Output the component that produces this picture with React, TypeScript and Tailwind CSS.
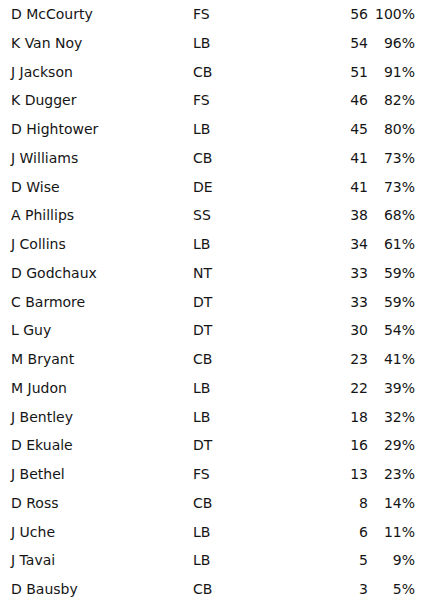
const rows: [string, string, number, string][] = [
  ["D McCourty", "FS", 56, "100%"],
  ["K Van Noy", "LB", 54, "96%"],
  ["J Jackson", "CB", 51, "91%"],
  ["K Dugger", "FS", 46, "82%"],
  ["D Hightower", "LB", 45, "80%"],
  ["J Williams", "CB", 41, "73%"],
  ["D Wise", "DE", 41, "73%"],
  ["A Phillips", "SS", 38, "68%"],
  ["J Collins", "LB", 34, "61%"],
  ["D Godchaux", "NT", 33, "59%"],
  ["C Barmore", "DT", 33, "59%"],
  ["L Guy", "DT", 30, "54%"],
  ["M Bryant", "CB", 23, "41%"],
  ["M Judon", "LB", 22, "39%"],
  ["J Bentley", "LB", 18, "32%"],
  ["D Ekuale", "DT", 16, "29%"],
  ["J Bethel", "FS", 13, "23%"],
  ["D Ross", "CB", 8, "14%"],
  ["J Uche", "LB", 6, "11%"],
  ["J Tavai", "LB", 5, "9%"],
  ["D Bausby", "CB", 3, "5%"],
];

export default function App() {
  return (
    <div
      className="w-[428px] h-[609px] bg-white text-[#151515] text-[14px]"
      style={{ fontFamily: '"DejaVu Sans", Verdana, sans-serif' }}
    >
      {rows.map(([name, pos, n, pct]) => (
        <div key={name} className="flex h-[28.75px] leading-[28.75px]">
          <div className="w-[193px] pl-[11px]">{name}</div>
          <div className="w-[60px]">{pos}</div>
          <div className="w-[115px] text-right">{n}</div>
          <div className="w-[47px] text-right">{pct}</div>
        </div>
      ))}
    </div>
  );
}
